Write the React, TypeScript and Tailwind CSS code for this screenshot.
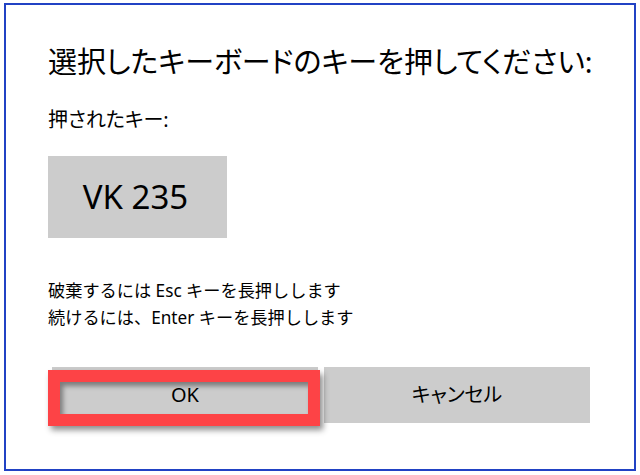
import React from "react";

const font = { fontFamily: '"Noto Sans", "Noto Sans CJK JP", sans-serif' };

export default function App() {
    return (
        <div className="w-[640px] h-[475px] bg-white pt-[3px] pl-[4px]" style={font}>
            <div className="w-[632px] h-[468px] border-2 border-[#2142c4] pl-[42px] text-black">
                <h1 className="mt-[39px] text-[29px] leading-[36px] [font-feature-settings:'palt']">
                    選択したキーボードのキーを押してください:
                </h1>
                <p className="mt-[27px] text-[20px] leading-[26px] [font-feature-settings:'palt']">押されたキー:</p>
                <div className="mt-[23px] w-[179px] h-[82px] bg-[#cccccc] flex items-center justify-center text-[33px] pr-[4px]">
                    VK 235
                </div>
                <div className="mt-[39px] text-[17.2px] leading-[27px]">
                    <div>破棄するには Esc キーを長押しします</div>
                    <div>続けるには、Enter キーを長押しします</div>
                </div>
                <div className="mt-[36px] flex gap-[6px] pl-[4px]">
                    <div className="relative w-[266px] h-[56px] bg-[#cccccc] flex items-center justify-center text-[20px]">
                        OK
                        <div className="absolute left-[-4px] top-[3px] w-[272px] h-[56px] border-[12px] border-[#fd4346] shadow-[3px_4px_6px_rgba(0,0,0,0.45),inset_3px_4px_5px_rgba(0,0,0,0.4)]" />
                    </div>
                    <div className="w-[266px] h-[56px] bg-[#cccccc] flex items-center justify-center text-[20px] [font-feature-settings:'palt']">
                        キャンセル
                    </div>
                </div>
            </div>
        </div>
    );
}
